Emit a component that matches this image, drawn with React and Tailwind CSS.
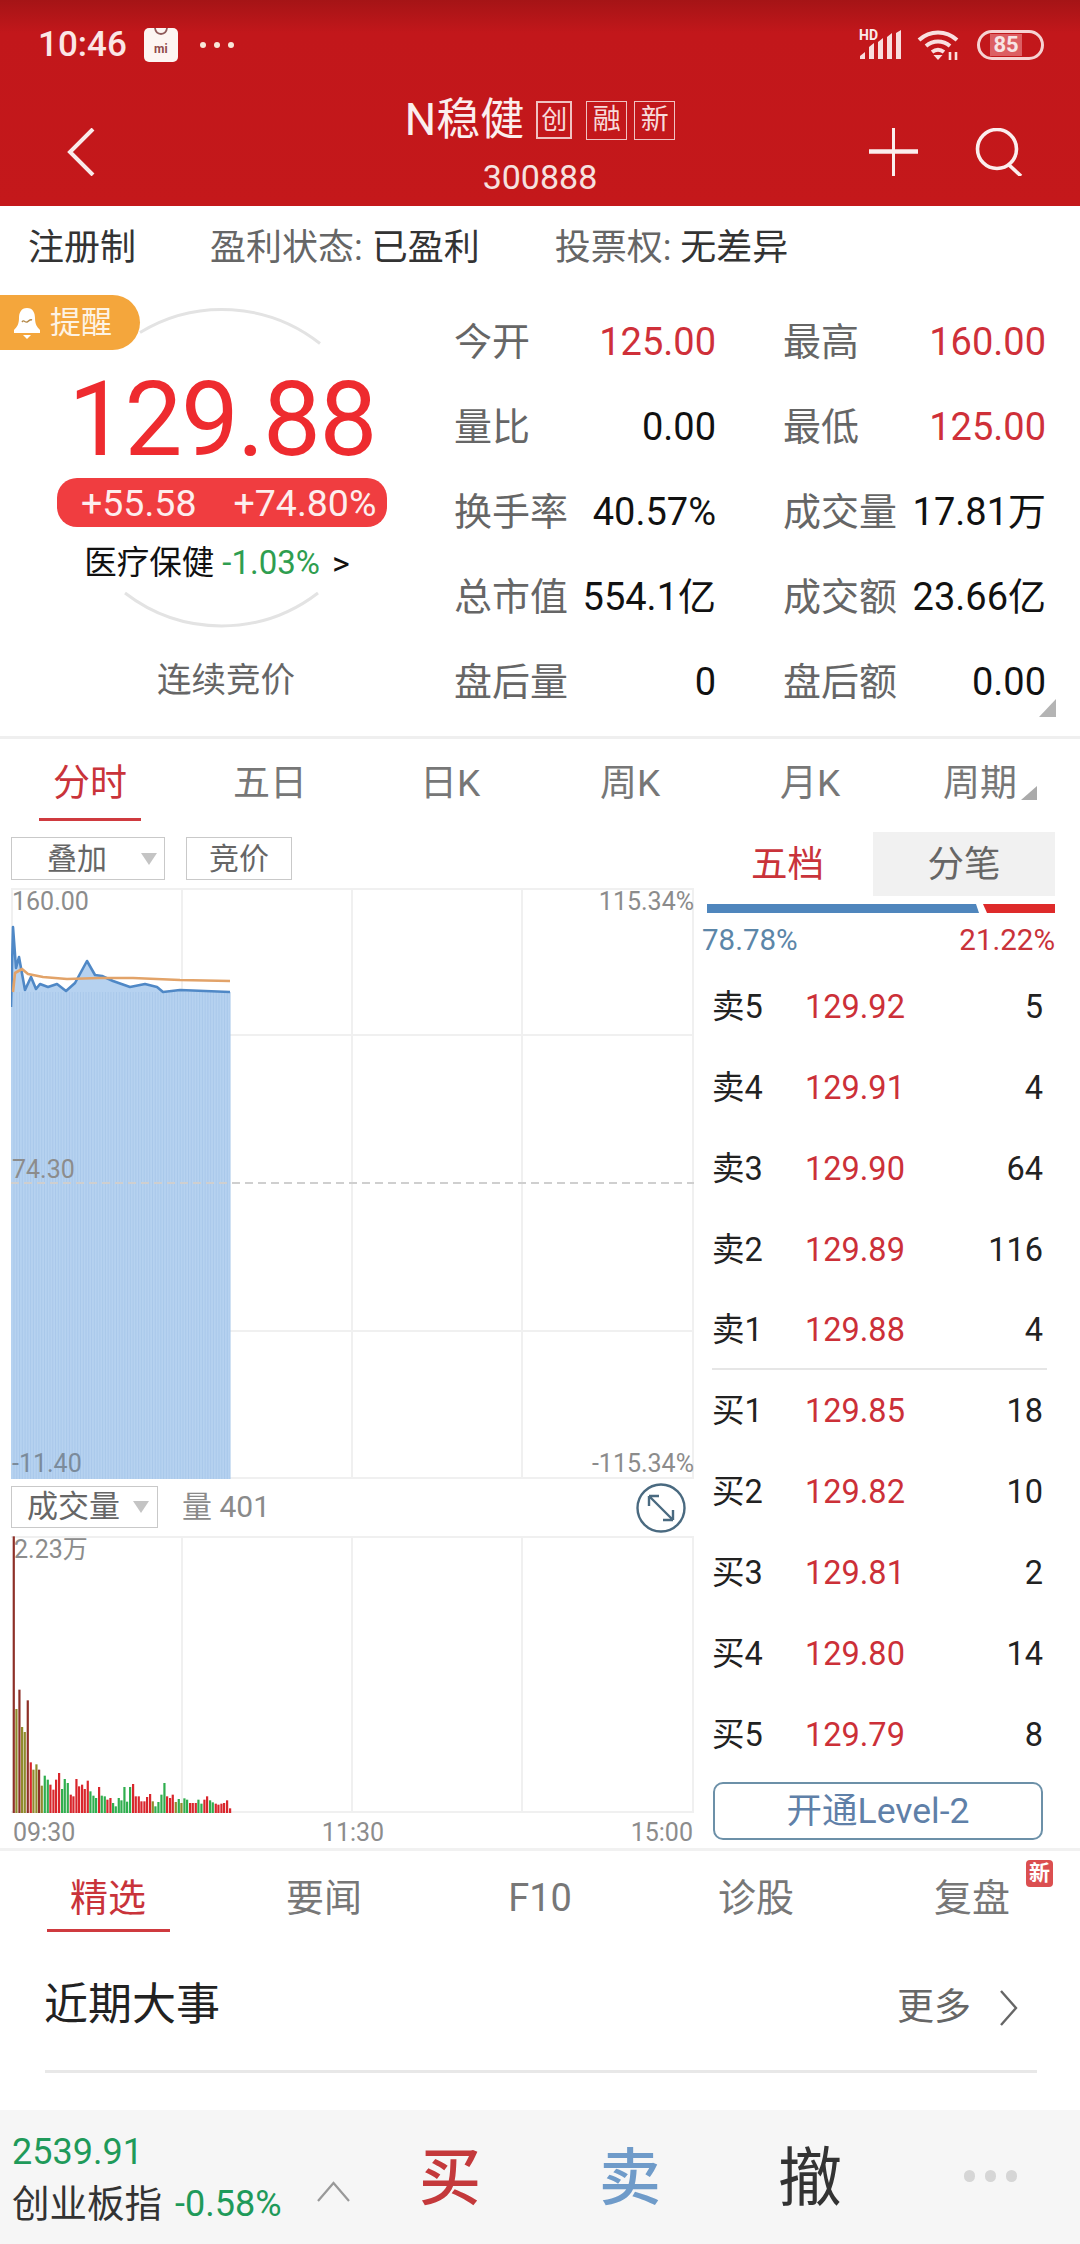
import React from "react";

const R = "#d9262c", G = "#2fae4e", O = "#8f8a2c", D = "#8e3028";
const bars = [[41,830,D],[49,312,O],[58,370,D],[66,258,O],[74,243,O],[83,338,D],[92,152,R],[100,130,O],[109,146,O],[117,130,D],[125,82,O],[134,112,G],[143,100,G],[151,85,R],[160,70,R],[168,100,R],[177,120,R],[186,72,G],[194,102,G],[203,90,G],[212,55,R],[220,50,R],[229,102,R],[237,80,R],[246,85,R],[254,72,R],[263,97,R],[271,65,G],[280,52,G],[288,45,G],[297,78,R],[305,52,G],[314,50,G],[322,40,R],[331,45,R],[339,30,G],[347,20,G],[356,45,G],[364,38,G],[373,78,G],[381,34,G],[390,78,G],[399,87,R],[407,50,R],[416,50,R],[424,35,R],[433,35,R],[441,48,R],[450,57,R],[458,35,O],[466,20,G],[475,33,G],[484,55,G],[493,90,G],[501,50,R],[510,45,R],[518,55,R],[527,33,O],[536,42,G],[544,30,O],[553,44,G],[561,40,G],[570,30,R],[578,30,R],[587,30,R],[595,40,G],[604,28,G],[613,40,R],[621,50,R],[630,38,G],[638,32,G],[647,28,R],[655,25,R],[664,28,R],[672,30,R],[681,38,R],[690,14,R]];

const priceLine = [[0,119],[2,39],[5,80],[8,69],[14,102],[20,89],[25,101],[29,96],[37,99],[46,96],[55,103],[64,95],[76,73],[84,87],[91,88],[102,93],[119,99],[134,96],[146,99],[152,104],[169,102],[219,104]];
const avgLine = [[2,104],[4,85],[11,81],[17,86],[32,89],[56,91],[89,90],[122,90],[169,92],[219,93]];
const toPts = (a) => a.map((p) => p.join(",")).join(" ");
const stripes = Array.from({ length: 79 }, (_, i) => 3 + i * 2.77);

const stats = [
  ["今开", "125.00", true, "最高", "160.00", true],
  ["量比", "0.00", false, "最低", "125.00", true],
  ["换手率", "40.57%", false, "成交量", "17.81万", false],
  ["总市值", "554.1亿", false, "成交额", "23.66亿", false],
  ["盘后量", "0", false, "盘后额", "0.00", false],
];
const book = [
  ["卖5", "129.92", "5"], ["卖4", "129.91", "4"], ["卖3", "129.90", "64"], ["卖2", "129.89", "116"], ["卖1", "129.88", "4"],
  ["买1", "129.85", "18"], ["买2", "129.82", "10"], ["买3", "129.81", "2"], ["买4", "129.80", "14"], ["买5", "129.79", "8"],
];

function Caret() {
  return <span className="w-0 h-0 border-l-[8px] border-r-[8px] border-t-[12px] border-l-transparent border-r-transparent border-t-[#c4c4c4]" />;
}

function Stat({ label, value, red }) {
  return (
    <div className="flex items-center justify-between h-[85px]">
      <span className="text-[38px] leading-[44px] text-[#666]">{label}</span>
      <span className={`text-[38px] leading-[44px] ${red ? "text-[#cf3039]" : "text-[#111]"}`}>{value}</span>
    </div>
  );
}

export default function App() {
  return (
    <div className="w-[1080px] h-[2244px] overflow-hidden flex flex-col bg-white font-[Roboto,'Noto_Sans_CJK_SC',sans-serif]">
      {/* header */}
      <div className="h-[206px] shrink-0 bg-[linear-gradient(#a51416,#c2171b_16%,#c4181b)] text-white flex flex-col">
        <div className="h-[90px] flex items-center pl-[38px] pr-[36px]">
          <span className="text-[35px] leading-[40px] font-medium text-[#fbe6e6]">10:46</span>
          <div className="ml-[17px] w-[34px] h-[34px] rounded-[5px] bg-[#fdf5f2] flex flex-col items-center">
            <svg width="18" height="10" viewBox="0 0 18 10"><path d="M3 0c1 8 11 8 12 0" fill="none" stroke="#8f5a5a" strokeWidth="1.8" /></svg>
            <span className="text-[12px] leading-[12px] mt-[5px] text-[#8f4a4a] font-bold">mi</span>
          </div>
          <div className="ml-[22px] flex gap-[8px]">
            <span className="w-[6px] h-[6px] rounded-full bg-[#f9e6d8]" />
            <span className="w-[6px] h-[6px] rounded-full bg-[#f9e6d8]" />
            <span className="w-[6px] h-[6px] rounded-full bg-[#f9e6d8]" />
          </div>
          <div className="flex-1" />
          <div className="relative w-[44px] h-[30px]">
            <svg className="absolute left-0 top-0" width="44" height="30" viewBox="0 0 44 30" fill="#f8dede">
              <path d="M1 29v-3l5-4v7zM10 29V17l5-4v16zM19 29V12l5-4v21zM28 29V7l5-4v26zM37 29V3l5-3v29z" />
            </svg>
            <span className="absolute left-0 top-[-2px] text-[14px] leading-[14px] font-bold text-[#fbeaea]">HD</span>
          </div>
          <svg className="ml-[14px]" width="43" height="32" viewBox="0 0 43 32" fill="none" stroke="#f9e0e0" strokeWidth="4">
            <path d="M2 11c11-10 27-10 38 0M9 17c7-6 17-6 24 0M15 23c4-3 8-3 12 0" />
            <path d="m16.500 26 4.500 5 4.500-5z" fill="#f9e0e0" stroke="none" />
            <path d="M33 23v8M39 23v8" strokeWidth="2.6" />
          </svg>
          <div className="ml-[17px] w-[67px] h-[30px] rounded-full border-[3px] border-[#f6d2d2] flex items-center justify-start pl-[10px]">
            <span className="w-[32px] h-[22px] bg-[#dc5f63] text-[22px] leading-[22px] text-center font-bold text-[#f7e4e4]">85</span>
          </div>
        </div>
        <div className="flex-1 grid grid-cols-[1fr_auto_1fr]">
          <div className="pl-[67px] pt-[38px]">
            <svg width="28" height="48" viewBox="0 0 28 48" fill="none" stroke="#f9eaea" strokeWidth="4">
              <path d="M26 1 3 24l23 23" />
            </svg>
          </div>
          <div className="flex flex-col items-center">
            <div className="flex items-center h-[60px] mt-[0px]">
              <span className="text-[44px] leading-[50px] text-[#fbeeee]">N稳健</span>
              <span className="ml-[12px] w-[36px] h-[38px] border-2 border-[#f0c2c2] flex items-center justify-center text-[26px] leading-[30px] text-[#f7dada]">创</span>
              <span className="ml-[14px] w-[41px] h-[39px] border border-[#f0c2c2] flex items-center justify-center text-[28px] leading-[30px] text-[#f7dada]">融</span>
              <span className="ml-[7px] w-[41px] h-[39px] border border-[#f0c2c2] flex items-center justify-center text-[28px] leading-[30px] text-[#f7dada]">新</span>
            </div>
            <span className="text-[34px] leading-[38px] mt-[8px] text-[#f6e2e0]">300888</span>
          </div>
          <div className="flex justify-end pr-[57px] pt-[38px] gap-[57px]">
            <svg width="49" height="48" viewBox="0 0 49 48" stroke="#fbeeee">
              <path d="M24.5 0v48" strokeWidth="3" />
              <path d="M0 23.5h49" strokeWidth="4.5" />
            </svg>
            <svg width="48" height="48" viewBox="0 0 48 48" fill="none" stroke="#fbeeee" strokeWidth="3.6">
              <circle cx="22" cy="21" r="19.5" />
              <path d="m33 36 13 12" />
            </svg>
          </div>
        </div>
      </div>

      {/* info row */}
      <div className="h-[69px] shrink-0 flex items-center pl-[28px] text-[36px] leading-[44px] pt-[20px] pb-[6px]">
        <span className="text-[#333]">注册制</span>
        <span className="ml-[74px] text-[#666]">盈利状态: <span className="text-[#333]">已盈利</span></span>
        <span className="ml-[75px] text-[#666]">投票权: <span className="text-[#333]">无差异</span></span>
      </div>

      {/* quote */}
      <div className="h-[461px] shrink-0 flex relative">
        <div className="w-[444px] relative flex flex-col items-center">
          <svg className="absolute left-0 top-0" width="444" height="461" fill="none" stroke="#e3e3e3" strokeWidth="3">
            <path d="M140 57.500A158 158 0 0 1 320 68.500" />
            <path d="M125 318A158 158 0 0 0 318 318" />
          </svg>
          <div className="absolute left-0 top-[20px] w-[140px] h-[55px] rounded-r-[28px] bg-[#f4a63c] flex items-center pl-[14px] text-[#fdf3e4]">
            <svg width="26" height="32" viewBox="0 0 26 32">
              <path d="M13 1c6 0 8 5 8 10 0 6 2 9 5 12v3H0v-3c3-3 5-6 5-12 0-5 2-10 8-10z" fill="#fff" />
              <path d="M9 28h8l-4 4z" fill="#fff" />
              <path d="M8 15c2-3 3 1 5 0s3-3 5-2" fill="none" stroke="#b58a4a" strokeWidth="1.4" />
            </svg>
            <span className="ml-[10px] text-[31px] leading-[40px]">提醒</span>
          </div>
          <span className="mt-[100px] text-[103px] leading-[90px] tracking-[-1.500px] text-[#ee2b2f] relative">129.88</span>
          <div className="mt-[13px] w-[330px] h-[49px] rounded-[20px] bg-[#f03d40] flex items-center pl-[24px] text-[37.5px] leading-[40px] text-[#fdeeee] relative">
            <span>+55.58</span>
            <span className="ml-[37px]">+74.80%</span>
          </div>
          <div className="mt-[16px] pr-[10px] flex items-center h-[40px] relative">
            <span className="text-[32.5px] leading-[40px] text-[#111]">医疗保健</span>
            <span className="ml-[8px] text-[33px] leading-[40px] text-[#2f9e50]">-1.03%</span>
            <span className="ml-[12px] text-[34px] leading-[40px] text-[#111]">&gt;</span>
          </div>
          <span className="mt-[75px] ml-[8px] text-[34.5px] leading-[44px] text-[#666] relative">连续竞价</span>
        </div>
        <div className="pl-[10px] pt-[24px] grid grid-cols-[262px_263px] gap-x-[67px] content-start">
          {stats.map((s) => (
            <React.Fragment key={s[0]}>
              <Stat label={s[0]} value={s[1]} red={s[2]} />
              <Stat label={s[3]} value={s[4]} red={s[5]} />
            </React.Fragment>
          ))}
        </div>
        <svg className="absolute left-[1039px] top-[424px]" width="17" height="18" viewBox="0 0 17 18"><path d="M17 0v18H0z" fill="#b4b4b4" /></svg>
      </div>
      <div className="h-[3px] shrink-0 bg-[#efefef]" />

      {/* period tabs */}
      <div className="h-[91px] shrink-0 grid grid-cols-6 text-[37px] leading-[40px] text-[#777]">
        <div className="flex flex-col items-center pt-[25px] text-[#c9333a]">
          <span>分时</span>
          <span className="mt-[14px] w-[102px] h-[3px] bg-[#cf3a3f]" />
        </div>
        {["五日", "日K", "周K", "月K"].map((t) => (
          <div key={t} className="flex justify-center pt-[25px]"><span>{t}</span></div>
        ))}
        <div className="flex justify-center pt-[25px]">
          <span>周期</span>
          <svg className="ml-[4px] mt-[22px]" width="16" height="14" viewBox="0 0 16 14"><path d="M16 0v14H0z" fill="#aaa" /></svg>
        </div>
      </div>

      {/* chart + order book */}
      <div className="h-[1018px] shrink-0 flex">
        <div className="w-[700px] flex flex-col">
          <div className="h-[58px] pl-[11px] pt-[7px] flex items-start">
            <div className="w-[154px] h-[43px] border border-[#c9c9c9] flex items-center pl-[35px] text-[30px] leading-[36px] text-[#666]">
              <span>叠加</span>
              <span className="ml-[34px] flex"><Caret /></span>
            </div>
            <div className="ml-[21px] w-[106px] h-[43px] border border-[#c9c9c9] flex items-center justify-center text-[30px] leading-[36px] text-[#666]">竞价</div>
          </div>
          <div className="ml-[11px] w-[683px] h-[591px] relative">
            <svg width="683" height="591" className="block">
              <g stroke="#f0f0f0" strokeWidth="2" fill="none">
                <path d="M0 1H683M0 147H683M0 443H683M0 590H683" />
                <path d="M1 0V591M171 0V591M341 0V591M511 0V591M682 0V591" />
              </g>
              <polygon points={`0,591 ${toPts(priceLine)} 219,591`} fill="#b6d2f0" />
              {stripes.map((x) => (
                <path key={x} d={`M${x} 104V591`} stroke="#a9c8ea" strokeWidth="1" />
              ))}
              <path d="M0 295H683" stroke="#cfcfcf" strokeWidth="2" strokeDasharray="8 5" />
              <polyline points={toPts(priceLine)} fill="none" stroke="#4f88c6" strokeWidth="2.6" strokeLinejoin="round" />
              <polyline points={toPts(avgLine)} fill="none" stroke="#e2a369" strokeWidth="2.6" strokeLinejoin="round" />
            </svg>
            <span className="absolute left-[1px] top-[1px] text-[25px] leading-[26px] text-[#8c8c8c]">160.00</span>
            <span className="absolute right-[0px] top-[1px] text-[25px] leading-[26px] text-[#8c8c8c]">115.34%</span>
            <span className="absolute left-[1px] top-[269px] text-[25px] leading-[26px] text-[#8c8c8c]">74.30</span>
            <span className="absolute left-[1px] top-[563px] text-[25px] leading-[26px] text-[#7b8b9b]">-11.40</span>
            <span className="absolute right-[0px] top-[563px] text-[25px] leading-[26px] text-[#8c8c8c]">-115.34%</span>
          </div>
          <div className="h-[57px] pl-[11px] pr-[14px] pt-[7px] flex items-start">
            <div className="w-[147px] h-[42px] border border-[#c9c9c9] flex items-center pl-[15px] text-[31px] leading-[36px] text-[#666]">
              <span>成交量</span>
              <span className="ml-[13px] flex"><Caret /></span>
            </div>
            <span className="ml-[24px] text-[30px] leading-[42px] text-[#8a8a8a]">量 401</span>
            <div className="flex-1" />
            <svg className="mt-[-3px]" width="50" height="50" viewBox="0 0 50 50" fill="none" stroke="#4a6a80" strokeWidth="2.4">
              <circle cx="25" cy="25" r="23.500" />
              <path d="M13 13 37 37M13 13h10M13 13v10M37 37H27M37 37V27" />
            </svg>
          </div>
          <div className="ml-[11px] w-[683px] h-[277px] relative">
            <svg width="683" height="277" className="block">
              <g stroke="#f0f0f0" strokeWidth="2" fill="none">
                <path d="M0 1H683M0 276H683" />
                <path d="M171 0V277M341 0V277M511 0V277M682 0V277" />
              </g>
              {bars.map(([x, h, c]) => (
                <rect key={x} x={x / 3 - 12} y={277 - h / 3} width="2.2" height={h / 3} fill={c} />
              ))}
            </svg>
            <span className="absolute left-[3px] top-[1px] text-[25px] leading-[26px] text-[#8c8c8c]">2.23万</span>
          </div>
          <div className="h-[35px] pl-[13px] pr-[7px] flex justify-between text-[25px] leading-[35px] pt-[2px] text-[#8c8c8c]">
            <span>09:30</span>
            <span>11:30</span>
            <span>15:00</span>
          </div>
        </div>

        <div className="w-[380px] pl-[2px] pt-[2px] flex flex-col">
          <div className="w-[353px] h-[64px] flex text-[36.500px] leading-[40px]">
            <div className="w-[171px] flex items-center justify-center pt-[1px] text-[#c9333a]">五档</div>
            <div className="flex-1 bg-[#f1f1f1] flex items-center justify-center pt-[1px] text-[#666]">分笔</div>
          </div>
          <svg className="ml-[5px] mt-[8px] shrink-0" width="348" height="9" viewBox="0 0 348 9">
            <polygon points="0,0 269,0 272,9 0,9" fill="#4f86bd" />
            <polygon points="276,0 348,0 348,9 280,9" fill="#de2a2a" />
          </svg>
          <div className="w-[353px] h-[53px] flex justify-between items-center text-[29.500px] leading-[36px]">
            <span className="text-[#5c86a8]">78.78%</span>
            <span className="text-[#c9333a]">21.22%</span>
          </div>
          {book.map((b, i) => (
            <div key={b[0]} className={`ml-[10px] w-[335px] h-[80.8px] flex items-center pt-[2px] text-[32.5px] leading-[40px] relative ${i === 4 ? "border-b-2 border-b-[#e6e6e6]" : ""}`}>
              <span className="w-[93px] text-[#222]">{b[0]}</span>
              <span className="text-[#cc3038]">{b[1]}</span>
              <span className="flex-1 text-right pr-[4px] text-[#222]">{b[2]}</span>
            </div>
          ))}
          <div className="ml-[11px] mt-[8px] w-[330px] h-[58px] border-2 border-[#6c90a8] rounded-[10px] flex items-center justify-center pt-[1px] text-[35.500px] leading-[40px] text-[#5f80a8]">开通Level-2</div>
        </div>
      </div>
      <div className="h-[3px] shrink-0 bg-[#f1f1f1]" />

      {/* news tabs */}
      <div className="h-[82px] shrink-0 grid grid-cols-5 text-[38px] leading-[40px] text-[#777]">
        <div className="flex flex-col items-center pt-[27px] text-[#c9333a]">
          <span>精选</span>
          <span className="mt-[11px] w-[123px] h-[3px] bg-[#cf3a3f]" />
        </div>
        <div className="flex justify-center pt-[27px]"><span>要闻</span></div>
        <div className="flex justify-center pt-[27px]"><span>F10</span></div>
        <div className="flex justify-center pt-[27px]"><span>诊股</span></div>
        <div className="flex justify-center pt-[27px] relative">
          <span>复盘</span>
          <span className="absolute left-[162px] top-[9px] w-[27px] h-[27px] rounded-[4px] bg-[#db4f50] text-white text-[21px] leading-[27px] text-center font-bold">新</span>
        </div>
      </div>
      <div className="h-[140px] shrink-0 ml-[45px] mr-[43px] pr-[19px] border-b-[3px] border-b-[#e8e8e8] flex items-center pt-[6px]">
        <span className="text-[44px] leading-[52px] text-[#222] ml-[-1px]">近期大事</span>
        <div className="flex-1" />
        <span className="text-[37px] leading-[44px] text-[#666] mt-[6px]">更多</span>
        <svg className="ml-[29px] mt-[6px]" width="18" height="36" viewBox="0 0 18 36" fill="none" stroke="#666" strokeWidth="2.4">
          <path d="m1 1 15 17L1 35" />
        </svg>
      </div>
      <div className="flex-1" />

      {/* footer */}
      <div className="h-[134px] shrink-0 bg-[#f6f6f6] flex">
        <div className="w-[360px] pl-[12px] pt-[21px] flex">
          <div className="flex flex-col">
            <span className="text-[36px] leading-[42px] text-[#1f9a5a]">2539.91</span>
            <div className="mt-[9px] flex items-center">
              <span className="text-[37.5px] leading-[44px] text-[#333]">创业板指</span>
              <span className="ml-[13px] text-[36px] leading-[44px] text-[#1f9a5a]">-0.58%</span>
            </div>
          </div>
          <svg className="ml-[35px] mt-[50px]" width="33" height="21" viewBox="0 0 33 21" fill="none" stroke="#999" strokeWidth="2.2">
            <path d="m1 20 15.500-18L32 20" />
          </svg>
        </div>
        <div className="w-[180px] flex justify-center pt-[33px] text-[62px] leading-[72px] font-medium text-[#c4393b]">买</div>
        <div className="w-[180px] flex justify-center pt-[33px] text-[62px] leading-[72px] font-medium text-[#6f9bc9]">卖</div>
        <div className="w-[180px] flex justify-center pt-[33px] text-[64px] leading-[72px] text-[#333]">撤</div>
        <div className="w-[180px] flex justify-center items-start gap-[10px] pt-[60px]">
          <span className="w-[11px] h-[12px] rounded-full bg-[#d6d6d6]" />
          <span className="w-[11px] h-[12px] rounded-full bg-[#d6d6d6]" />
          <span className="w-[11px] h-[12px] rounded-full bg-[#d6d6d6]" />
        </div>
      </div>
    </div>
  );
}
